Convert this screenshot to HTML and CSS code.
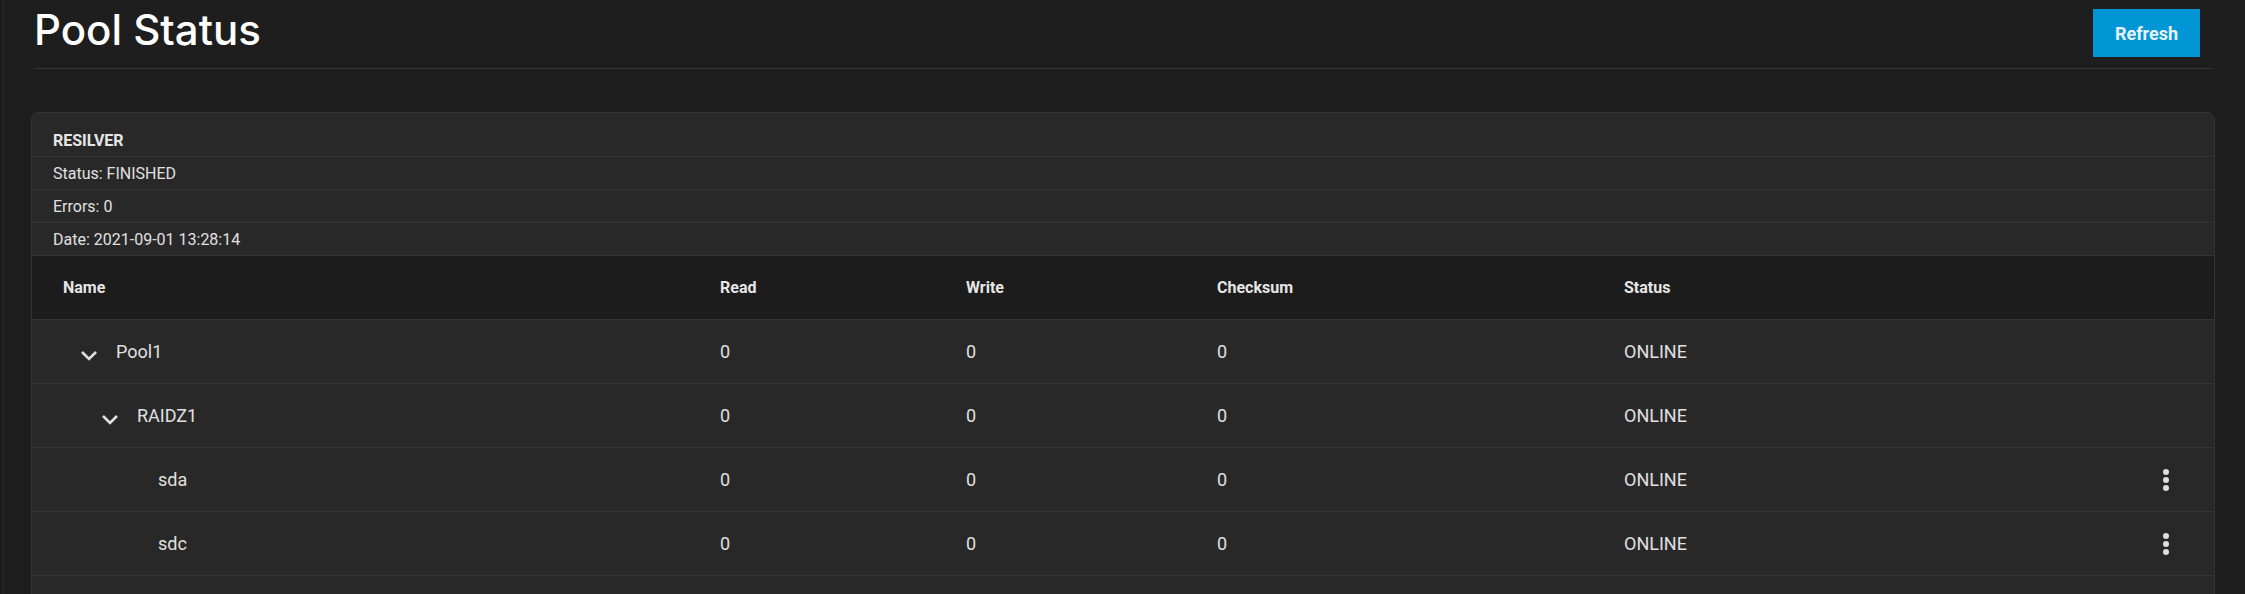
FILE: index.html
```html
<!DOCTYPE html>
<html lang="en">
<head>
<meta charset="utf-8">
<title>Pool Status</title>
<link rel="stylesheet" href="styles.css">
</head>
<body>
<div class="shell">
  <div class="edge"></div>
  <main class="main">
    <header class="page-header">
      <h1 class="page-title">Pool Status</h1>
      <button class="btn-refresh" type="button">Refresh</button>
    </header>

    <section class="card">
      <div class="res-title">RESILVER</div>
      <div class="res-row">Status: FINISHED</div>
      <div class="res-row">Errors: 0</div>
      <div class="res-row">Date: 2021-09-01 13:28:14</div>

      <div class="tbl">
        <div class="tr th">
          <div class="cell name-h">Name</div>
          <div class="cell">Read</div>
          <div class="cell">Write</div>
          <div class="cell">Checksum</div>
          <div class="cell">Status</div>
          <div class="cell act"></div>
        </div>

        <div class="tr">
          <div class="cell name lvl-0">
            <span class="chev"><svg width="18" height="11" viewBox="0 0 18 11"><polyline points="2,2 9,9 16,2" fill="none" stroke="#e0e0e0" stroke-width="2.6"/></svg></span>
            <span>Pool1</span>
          </div>
          <div class="cell">0</div>
          <div class="cell">0</div>
          <div class="cell">0</div>
          <div class="cell">ONLINE</div>
          <div class="cell act"></div>
        </div>

        <div class="tr">
          <div class="cell name lvl-1">
            <span class="chev"><svg width="18" height="11" viewBox="0 0 18 11"><polyline points="2,2 9,9 16,2" fill="none" stroke="#e0e0e0" stroke-width="2.6"/></svg></span>
            <span>RAIDZ1</span>
          </div>
          <div class="cell">0</div>
          <div class="cell">0</div>
          <div class="cell">0</div>
          <div class="cell">ONLINE</div>
          <div class="cell act"></div>
        </div>

        <div class="tr">
          <div class="cell name lvl-2">
            <span class="chev"></span>
            <span>sda</span>
          </div>
          <div class="cell">0</div>
          <div class="cell">0</div>
          <div class="cell">0</div>
          <div class="cell">ONLINE</div>
          <div class="cell act"><svg class="dots" width="8" height="24" viewBox="0 0 8 24"><circle cx="4" cy="4" r="3" fill="#e0e0e0"/><circle cx="4" cy="12" r="3" fill="#e0e0e0"/><circle cx="4" cy="20" r="3" fill="#e0e0e0"/></svg></div>
        </div>

        <div class="tr">
          <div class="cell name lvl-2">
            <span class="chev"></span>
            <span>sdc</span>
          </div>
          <div class="cell">0</div>
          <div class="cell">0</div>
          <div class="cell">0</div>
          <div class="cell">ONLINE</div>
          <div class="cell act"><svg class="dots" width="8" height="24" viewBox="0 0 8 24"><circle cx="4" cy="4" r="3" fill="#e0e0e0"/><circle cx="4" cy="12" r="3" fill="#e0e0e0"/><circle cx="4" cy="20" r="3" fill="#e0e0e0"/></svg></div>
        </div>

        <div class="tr">
          <div class="cell name lvl-1"></div>
          <div class="cell"></div>
          <div class="cell"></div>
          <div class="cell"></div>
          <div class="cell"></div>
          <div class="cell act"></div>
        </div>
      </div>
    </section>
  </main>
</div>
</body>
</html>
```

FILE: styles.css
```css
html, body {
  margin: 0;
  padding: 0;
  height: 100%;
  overflow: hidden;
  background: #1e1e1e;
  color: #e0e0e0;
  font-family: Roboto, "Liberation Sans", sans-serif;
}

.shell {
  display: flex;
  min-height: 100%;
}

.edge {
  width: 2px;
  background: #1a1a1a;
  border-right: 1px solid #2a2a2a;
  flex: none;
}

.main {
  flex: 1;
  padding: 0 30px 0 28px;
}

.page-header {
  height: 68px;
  margin: 0 3px;
  display: flex;
  justify-content: space-between;
  align-items: flex-start;
  border-bottom: 1px solid #363636;
}

.page-title {
  margin: 5px 0 0 0;
  font-family: Inter, Roboto, sans-serif;
  font-weight: 500;
  font-size: 42px;
  line-height: 50px;
  letter-spacing: 0;
  color: #ffffff;
}

.btn-refresh {
  margin: 9px 12px 0 0;
  width: 107px;
  height: 48px;
  border: 0;
  border-radius: 0;
  background: #0095d5;
  color: #e6f3fa;
  font-family: Roboto, sans-serif;
  font-weight: 700;
  font-size: 18px;
  padding: 0;
}

.card {
  margin-top: 43px;
  background: #282828;
  border: 1px solid #343434;
  border-radius: 8px;
  overflow: hidden;
}

.res-title {
  height: 44px;
  box-sizing: border-box;
  padding: 18px 21px 0;
  font-weight: 700;
  font-size: 16px;
  line-height: 20px;
  color: #e6e6e6;
  border-bottom: 1px solid #343434;
}

.res-row {
  height: 32px;
  padding: 0 21px;
  display: flex;
  align-items: center;
  font-size: 16px;
  color: #e0e0e0;
  border-bottom: 1px solid #343434;
}

.tbl {
  display: flex;
  flex-direction: column;
}

.tr {
  display: grid;
  grid-template-columns: 688px 246px 251px 407px 1fr 60px;
  height: 63px;
  border-bottom: 1px solid #343434;
  font-size: 18px;
  line-height: 24px;
  color: #e0e0e0;
}

.tr.th {
  height: 63px;
  background: #1c1c1c;
  font-size: 16px;
  font-weight: 700;
  color: #e6e6e6;
}

.cell {
  display: flex;
  align-items: center;
}

.name-h {
  padding-left: 31px;
}

.name {
  gap: 18px;
}

.lvl-0 { padding-left: 31px; }
.lvl-1 { padding-left: 52px; }
.lvl-2 { padding-left: 73px; }

.chev {
  width: 18px;
  height: 11px;
  margin-left: 17px;
  margin-top: 8px;
  display: flex;
}

.act {
  justify-content: flex-end;
  padding-right: 44px;
}

.dots {
  display: block;
}
```
